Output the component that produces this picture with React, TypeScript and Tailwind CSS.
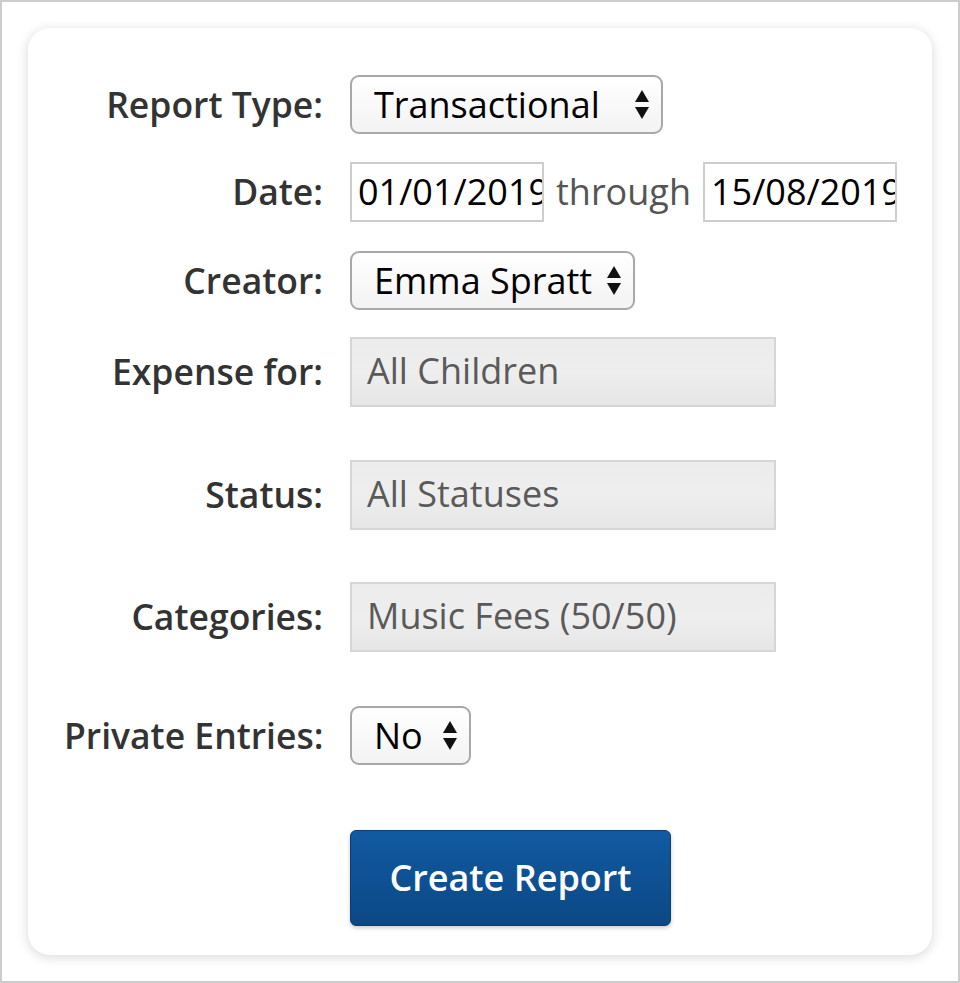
import React from "react";

const font = { fontFamily: '"Open Sans", "Noto Sans", sans-serif' };

function Arrows() {
  return (
    <svg width="16" height="32" viewBox="0 0 16 32" className="shrink-0">
      <polygon points="8,1 15,13 1,13" fill="#111" />
      <polygon points="1,18 15,18 8,30" fill="#111" />
    </svg>
  );
}

function Select({ value, width }: { value: string; width: string }) {
  return (
    <div
      className={`${width} h-[59px] flex items-center justify-between pl-[22px] pr-[11px] border-2 border-[#a8a8a8] rounded-[9px] bg-gradient-to-b from-white to-[#f3f3f3] text-[36px] text-black leading-none`}
    >
      <span className="whitespace-nowrap">{value}</span>
      <Arrows />
    </div>
  );
}

function Gray({ value }: { value: string }) {
  return (
    <div className="w-[426px] h-[70px] flex items-center pl-[15px] pb-[3px] border-2 border-[#d6d6d6] bg-gradient-to-b from-[#ececec] via-[#eeeeee] to-[#e6e6e6] text-[36px] text-[#5a5a5a] leading-none">
      <span className="whitespace-nowrap">{value}</span>
    </div>
  );
}

function DateBox({ value }: { value: string }) {
  return (
    <div className="w-[194px] h-[60px] shrink-0 flex items-center pl-[6px] border-2 border-[#cdcdcd] bg-white text-[36px] text-black leading-none overflow-hidden">
      <span className="whitespace-nowrap">{value}</span>
    </div>
  );
}

function Row({ label, children, className = "" }: { label: string; children: React.ReactNode; className?: string }) {
  return (
    <div className={`flex items-center ${className}`}>
      <div className="w-[259px] shrink-0 text-right font-semibold text-[35.5px] text-[#333333] whitespace-nowrap leading-none">
        {label}
      </div>
      <div className="ml-[27px] shrink-0">{children}</div>
    </div>
  );
}

export default function App() {
  return (
    <div style={font} className="w-[960px] h-[983px] border-2 border-[#cccccc] bg-white p-[26px]">
      <div className="h-full w-full bg-white rounded-[22px] shadow-[0_2px_12px_rgba(0,0,0,0.16)] pt-[47px] flex flex-col items-center">
        <div className="flex flex-col w-[832px]">
          <Row label="Report Type:">
            <Select value="Transactional" width="w-[313px]" />
          </Row>
          <Row label="Date:" className="mt-[28px]">
            <div className="flex items-center">
              <DateBox value="01/01/2019" />
              <span className="mx-[12px] text-[36px] text-[#555555] leading-none whitespace-nowrap">through</span>
              <DateBox value="15/08/2019" />
            </div>
          </Row>
          <Row label="Creator:" className="mt-[29px]">
            <Select value="Emma Spratt" width="w-[285px]" />
          </Row>
          <Row label="Expense for:" className="mt-[27px]">
            <Gray value="All Children" />
          </Row>
          <Row label="Status:" className="mt-[53px]">
            <Gray value="All Statuses" />
          </Row>
          <Row label="Categories:" className="mt-[52px]">
            <Gray value="Music Fees (50/50)" />
          </Row>
          <Row label="Private Entries:" className="mt-[54px]">
            <Select value="No" width="w-[121px]" />
          </Row>
          <div className="flex mt-[65px]">
            <div className="w-[259px] shrink-0" />
            <button className="ml-[27px] w-[321px] h-[96px] rounded-[6px] border border-[#0a3e72] bg-gradient-to-b from-[#115aa2] to-[#0c4885] text-white font-semibold text-[36px] leading-none shadow-[0_2px_4px_rgba(0,0,0,0.2)]">
              Create Report
            </button>
          </div>
        </div>
      </div>
    </div>
  );
}
